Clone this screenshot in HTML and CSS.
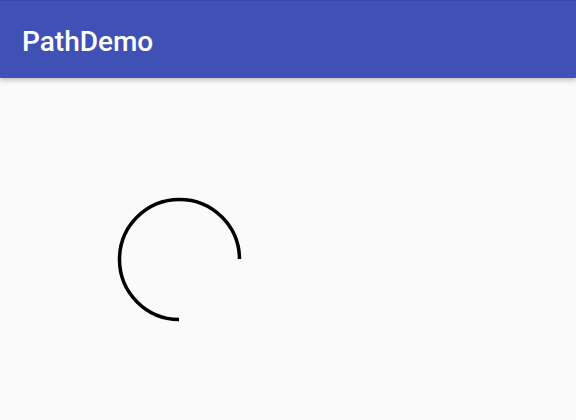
FILE: index.html
```html
<!DOCTYPE html>
<html>
<head>
<meta charset="utf-8">
<link rel="stylesheet" href="styles.css">
</head>
<body>
<header class="appbar">
  <h1 class="title">PathDemo</h1>
</header>
<main class="content">
  <svg class="canvas" width="576" height="342" viewBox="0 78 576 342">
    <path d="M 239.5 259 A 60 60 0 1 0 179 319.5" fill="none" stroke="#000" stroke-width="3.5"/>
  </svg>
</main>
</body>
</html>
```
FILE: styles.css
```css
html, body {
  margin: 0;
  padding: 0;
  width: 576px;
  height: 420px;
  overflow: hidden;
  background: #fafafa;
  font-family: Roboto, "Noto Sans", sans-serif;
}
.appbar {
  position: relative;
  z-index: 1;
  height: 78px;
  background: #3f51b5;
  border-top: 1px solid #3949ab;
  box-sizing: border-box;
  display: flex;
  align-items: center;
  padding-left: 22px;
  padding-top: 3px;
  box-shadow: 0 2px 5px rgba(0,0,0,0.26);
}
.title {
  margin: 0;
  color: #fff;
  font-size: 28px;
  font-weight: 500;
}
.content {
  height: 342px;
}
.canvas {
  display: block;
}
```
